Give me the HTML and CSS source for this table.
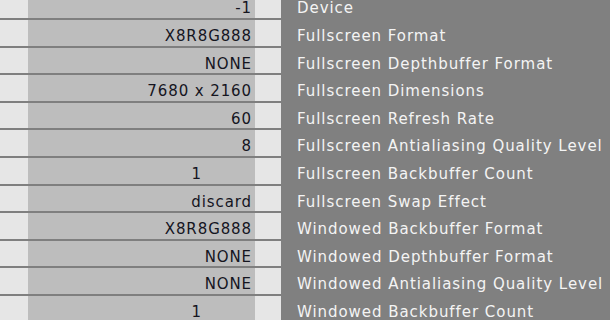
FILE: index.html
```html
<!DOCTYPE html>
<html>
<head>
<meta charset="utf-8">
<link rel="stylesheet" href="styles.css">
</head>
<body>
<div class="table">
  <div class="row"><div class="pad"></div><div class="val">-1</div><div class="pad"></div><div class="name">Device</div></div>
  <div class="row"><div class="pad"></div><div class="val">X8R8G888</div><div class="pad"></div><div class="name">Fullscreen Format</div></div>
  <div class="row"><div class="pad"></div><div class="val">NONE</div><div class="pad"></div><div class="name">Fullscreen Depthbuffer Format</div></div>
  <div class="row"><div class="pad"></div><div class="val">7680 x 2160</div><div class="pad"></div><div class="name">Fullscreen Dimensions</div></div>
  <div class="row"><div class="pad"></div><div class="val">60</div><div class="pad"></div><div class="name">Fullscreen Refresh Rate</div></div>
  <div class="row"><div class="pad"></div><div class="val">8</div><div class="pad"></div><div class="name">Fullscreen Antialiasing Quality Level</div></div>
  <div class="row"><div class="pad"></div><div class="val count">1</div><div class="pad"></div><div class="name">Fullscreen Backbuffer Count</div></div>
  <div class="row"><div class="pad"></div><div class="val">discard</div><div class="pad"></div><div class="name">Fullscreen Swap Effect</div></div>
  <div class="row"><div class="pad"></div><div class="val">X8R8G888</div><div class="pad"></div><div class="name">Windowed Backbuffer Format</div></div>
  <div class="row"><div class="pad"></div><div class="val">NONE</div><div class="pad"></div><div class="name">Windowed Depthbuffer Format</div></div>
  <div class="row"><div class="pad"></div><div class="val">NONE</div><div class="pad"></div><div class="name">Windowed Antialiasing Quality Level</div></div>
  <div class="row"><div class="pad"></div><div class="val count">1</div><div class="pad"></div><div class="name">Windowed Backbuffer Count</div></div>
</div>
</body>
</html>
```
FILE: styles.css
```css
html, body {
  margin: 0;
  padding: 0;
  background: #808080;
  overflow: hidden;
}
.table {
  margin-top: -7.6px;
  font-family: "DejaVu Sans", sans-serif;
  font-size: 15px;
}
.row {
  display: grid;
  grid-template-columns: 28px 227px 26px 1fr;
  height: 27.6px;
}
.pad, .val {
  border-bottom: 2px solid #7f7f7f;
  box-sizing: border-box;
}
.pad {
  background: #e6e6e6;
}
.val {
  background: #bdbdbd;
  color: #15151f;
  text-align: right;
  padding: 7px 3px 0 0;
  letter-spacing: 0.9px;
  white-space: nowrap;
}
.val.count {
  padding-right: 53px;
}
.name {
  background: #808080;
  color: #f4f4f4;
  padding: 7px 0 0 16px;
  letter-spacing: 0.95px;
  white-space: nowrap;
}
```
